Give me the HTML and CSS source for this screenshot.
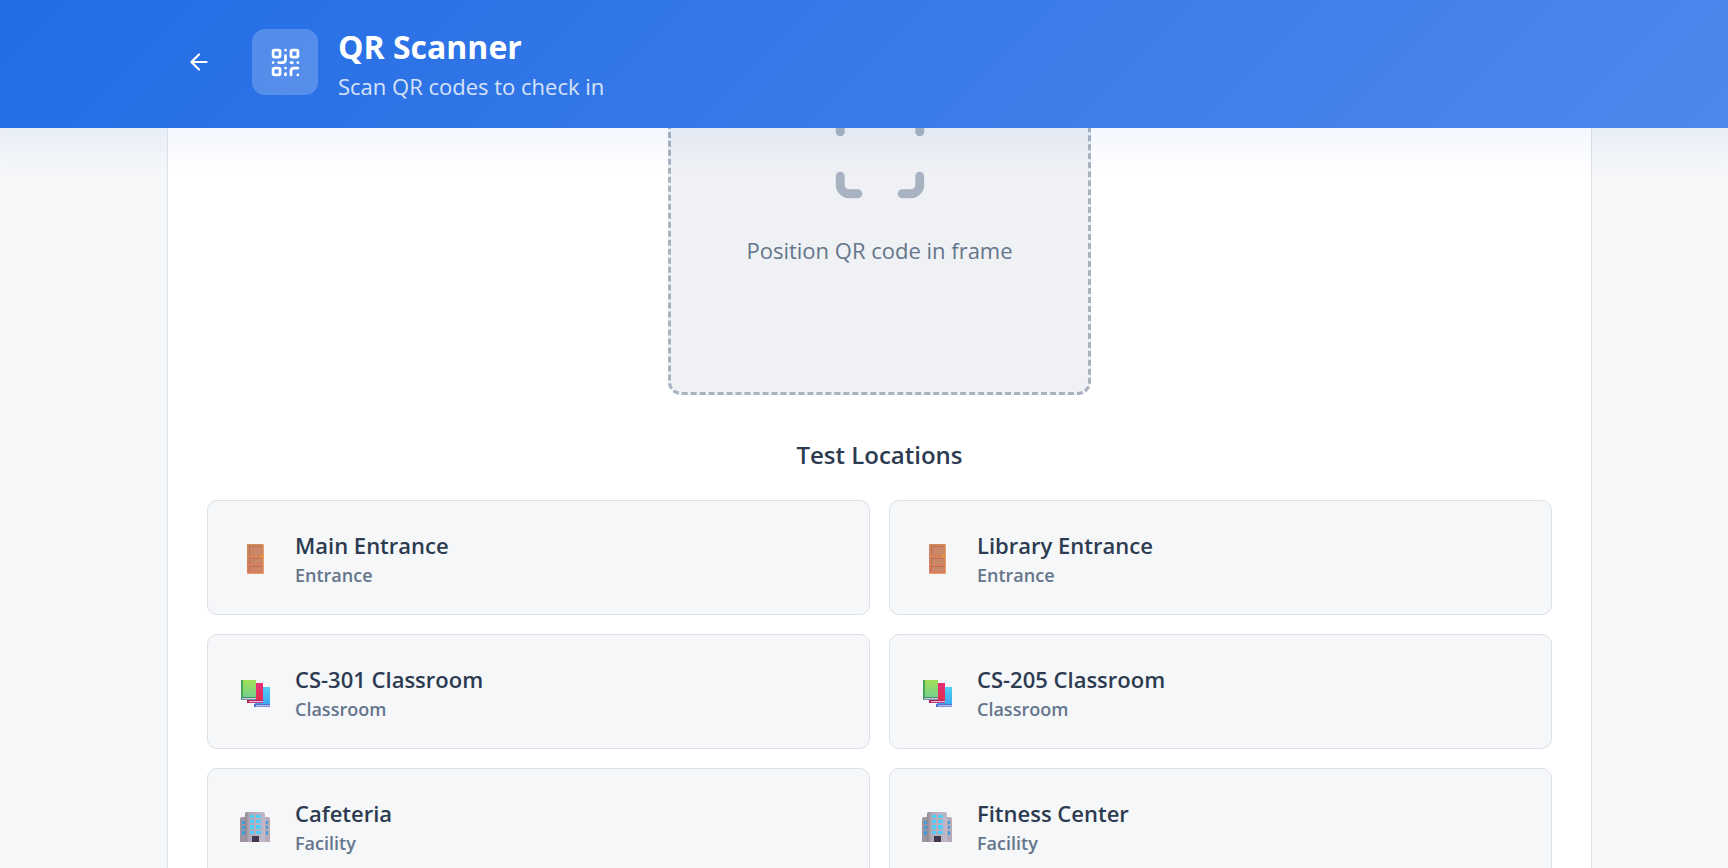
FILE: index.html
```html
<!DOCTYPE html>
<html lang="en">
<head>
<meta charset="utf-8">
<title>QR Scanner</title>
<link rel="stylesheet" href="styles.css">
</head>
<body>
<svg class="sprite" aria-hidden="true">
  <defs>
    <linearGradient id="g-green" x1="0" y1="0" x2="0" y2="1"><stop offset="0" stop-color="#a3df55"/><stop offset="1" stop-color="#6fd095"/></linearGradient>
    <linearGradient id="g-blue" x1="0" y1="0" x2="0" y2="1"><stop offset="0" stop-color="#55d0f8"/><stop offset="1" stop-color="#38a0ee"/></linearGradient>
    <linearGradient id="g-red" x1="0" y1="0" x2="0" y2="1"><stop offset="0" stop-color="#e52d78"/><stop offset="1" stop-color="#e3314b"/></linearGradient>
    <linearGradient id="g-wall" x1="0" y1="0" x2="1" y2="0"><stop offset="0" stop-color="#8d8590"/><stop offset=".2" stop-color="#b1a8b6"/><stop offset="1" stop-color="#c2b8ca"/></linearGradient>
    <linearGradient id="g-door" x1="0" y1="0" x2="0" y2="1"><stop offset="0" stop-color="#d18a5b"/><stop offset="1" stop-color="#d97b5f"/></linearGradient>
  </defs>
  <symbol id="door" viewBox="0 0 32 32">
    <rect x="8" y="1" width="17" height="30" rx="1" fill="#e6a070"/>
    <rect x="8" y="1" width="16" height="29" rx="1" fill="url(#g-door)"/>
    <path d="M10 3h13v9H10zM10 15h13v6H10zM10 23h13v5H10z" fill="#bb6f54"/>
    <path d="M11 4h12v8H11zM11 16h12v5H11zM11 24h12v4H11z" fill="#c98767"/>
    <circle cx="22.600" cy="13.500" r="1.200" fill="#f5a01d"/>
  </symbol>
  <symbol id="books" viewBox="0 0 32 32">
    <path d="M16 10h15v20H16z" fill="url(#g-blue)"/><path d="M15 27h16v3H15z" fill="#4b72cd"/><path d="M17 28h14v1.500H17z" fill="#b8b6ea"/>
    <path d="M9 6h15v19H9z" fill="url(#g-red)"/><path d="M8 23h16v3H8z" fill="#b51e60"/><path d="M10 24h14v1.200H10z" fill="#efb7db"/>
    <path d="M2 3h15v19H2z" fill="url(#g-green)"/><path d="M2 3h2v20H2z" fill="#45a657"/><path d="M2 20h15v3H2z" fill="#468b69"/><path d="M3 21h14v1.300H3z" fill="#d3c6e8"/>
  </symbol>
  <symbol id="building" viewBox="0 0 32 32">
    <path d="M1 8q0-2 2-2h5v25H1z" fill="#9d95a1"/><path d="M24 6h5q2 0 2 2v23h-7z" fill="#b5abb9"/>
    <path d="M6 3q0-2 2-2h16q2 0 2 2v28H6z" fill="url(#g-wall)"/>
    <path d="M11 4h4v3h-4zM17 4h5v3h-5zM11 9h4v3h-4zM17 9h5v3h-5zM11 14h4v4h-4zM17 14h5v4h-5zM11 20h4v3h-4zM17 20h5v3h-5z" fill="#4fcdff"/>
    <path d="M3 10h3v3H3zM3 15h3v3H3zM3 20h3v4H3zM27 10h2v3h-2zM27 15h2v3h-2zM27 20h2v4h-2z" fill="#3f9fdd"/>
    <path d="M13 25h7v6h-7z" fill="#40364e"/>
  </symbol>
</svg>

<header class="topbar">
  <button class="back" type="button" aria-label="Back">
    <svg class="back-icon" viewBox="0 0 24 24"><path d="m12 19-7-7 7-7M19 12H5"/></svg>
  </button>
  <div class="badge">
    <svg class="qr-icon" viewBox="0 0 24 24">
      <rect width="5" height="5" x="3" y="3" rx="1"/><rect width="5" height="5" x="16" y="3" rx="1"/><rect width="5" height="5" x="3" y="16" rx="1"/>
      <path d="M21 16h-3a2 2 0 0 0-2 2v3M21 21v.01M12 7v3a2 2 0 0 1-2 2H7M3 12h.01M12 3h.01M12 16v.01M16 12h1M21 12v.01M12 21v-1"/>
    </svg>
  </div>
  <div class="heading">
    <h1 class="title">QR Scanner</h1>
    <p class="subtitle">Scan QR codes to check in</p>
  </div>
</header>

<main class="page">
  <section class="panel">
    <div class="frame">
      <svg class="scan-icon" viewBox="0 0 24 24"><path d="M3 7V5a2 2 0 0 1 2-2h2M17 3h2a2 2 0 0 1 2 2v2M21 17v2a2 2 0 0 1-2 2h-2M7 21H5a2 2 0 0 1-2-2v-2"/></svg>
      <p class="hint">Position QR code in frame</p>
    </div>
    <h2 class="section-title">Test Locations</h2>
    <div class="locations">
      <button class="location" type="button"><svg class="emoji"><use href="#door"/></svg><span class="info"><span class="name">Main Entrance</span><span class="kind">Entrance</span></span></button>
      <button class="location" type="button"><svg class="emoji"><use href="#door"/></svg><span class="info"><span class="name">Library Entrance</span><span class="kind">Entrance</span></span></button>
      <button class="location" type="button"><svg class="emoji"><use href="#books"/></svg><span class="info"><span class="name">CS-301 Classroom</span><span class="kind">Classroom</span></span></button>
      <button class="location" type="button"><svg class="emoji"><use href="#books"/></svg><span class="info"><span class="name">CS-205 Classroom</span><span class="kind">Classroom</span></span></button>
      <button class="location" type="button"><svg class="emoji"><use href="#building"/></svg><span class="info"><span class="name">Cafeteria</span><span class="kind">Facility</span></span></button>
      <button class="location" type="button"><svg class="emoji"><use href="#building"/></svg><span class="info"><span class="name">Fitness Center</span><span class="kind">Facility</span></span></button>
    </div>
  </section>
</main>
</body>
</html>
```

FILE: styles.css
```css
* {
  box-sizing: border-box;
}

body {
  margin: 0;
  height: 100vh;
  overflow: hidden;
  background: #f5f7f9;
  color: #2d3b50;
  font-family: "Segoe UI", "Open Sans", "Noto Sans", sans-serif;
}

h1, h2, p {
  margin: 0;
}

.sprite {
  position: absolute;
  width: 0;
  height: 0;
}

.topbar {
  position: relative;
  z-index: 1;
  display: flex;
  align-items: center;
  height: 128px;
  padding: 0 136px 4px 168px;
  background: linear-gradient(135deg, #226ce5, #4d88eb);
  box-shadow: 0 0 32px 20px rgba(34, 108, 229, 0.06);
  color: #fff;
}

.back {
  display: flex;
  justify-content: center;
  align-items: center;
  width: 62px;
  height: 62px;
  margin-right: 22px;
  padding: 0;
  border: 0;
  background: none;
  color: inherit;
}

.back-icon, .qr-icon, .scan-icon {
  fill: none;
  stroke: currentColor;
  stroke-width: 2;
  stroke-linecap: round;
  stroke-linejoin: round;
}

.back-icon {
  width: 26px;
  height: 26px;
}

.badge {
  display: flex;
  justify-content: center;
  align-items: center;
  width: 66px;
  height: 66px;
  margin-right: 20px;
  border-radius: 13px;
  background: rgba(255, 255, 255, 0.2);
}

.qr-icon {
  width: 33px;
  height: 33px;
}

.heading {
  padding-top: 8px;
}

.title {
  font-size: 32px;
  font-weight: 700;
  line-height: 40px;
}

.subtitle {
  font-size: 22px;
  line-height: 38px;
  opacity: 0.8;
}

.page {
  padding: 0 136px 0 167px;
}

.panel {
  margin-top: -197px;
  padding: 40px 39px;
  border: 1px solid #dfe3ea;
  background: #fff;
}

.frame {
  display: flex;
  flex-direction: column;
  justify-content: center;
  align-items: center;
  gap: 26px;
  width: 423px;
  height: 423px;
  margin: 0 auto;
  border: 3px dashed #a8b2c1;
  border-radius: 13px;
  background: #eff1f5;
}

.scan-icon {
  width: 106px;
  height: 106px;
  color: #a8b2c1;
}

.hint {
  color: #65758b;
  font-size: 22px;
  line-height: 34px;
}

.section-title {
  margin: 40px 0 25px;
  font-size: 24px;
  font-weight: 600;
  line-height: 40px;
  text-align: center;
}

.locations {
  display: grid;
  grid-template-columns: 1fr 1fr;
  gap: 19px;
}

.location {
  display: flex;
  align-items: center;
  gap: 24px;
  height: 115px;
  padding: 2px 31px 0;
  border: 1px solid #dbe0e9;
  border-radius: 10px;
  background: #f5f7f9;
  color: inherit;
  font-family: inherit;
  text-align: left;
}

.emoji {
  width: 32px;
  height: 32px;
}

.info {
  display: flex;
  flex-direction: column;
}

.name {
  font-size: 22px;
  font-weight: 600;
  line-height: 32px;
}

.kind {
  color: #65758b;
  font-size: 18px;
  font-weight: 600;
  line-height: 28px;
}
```
